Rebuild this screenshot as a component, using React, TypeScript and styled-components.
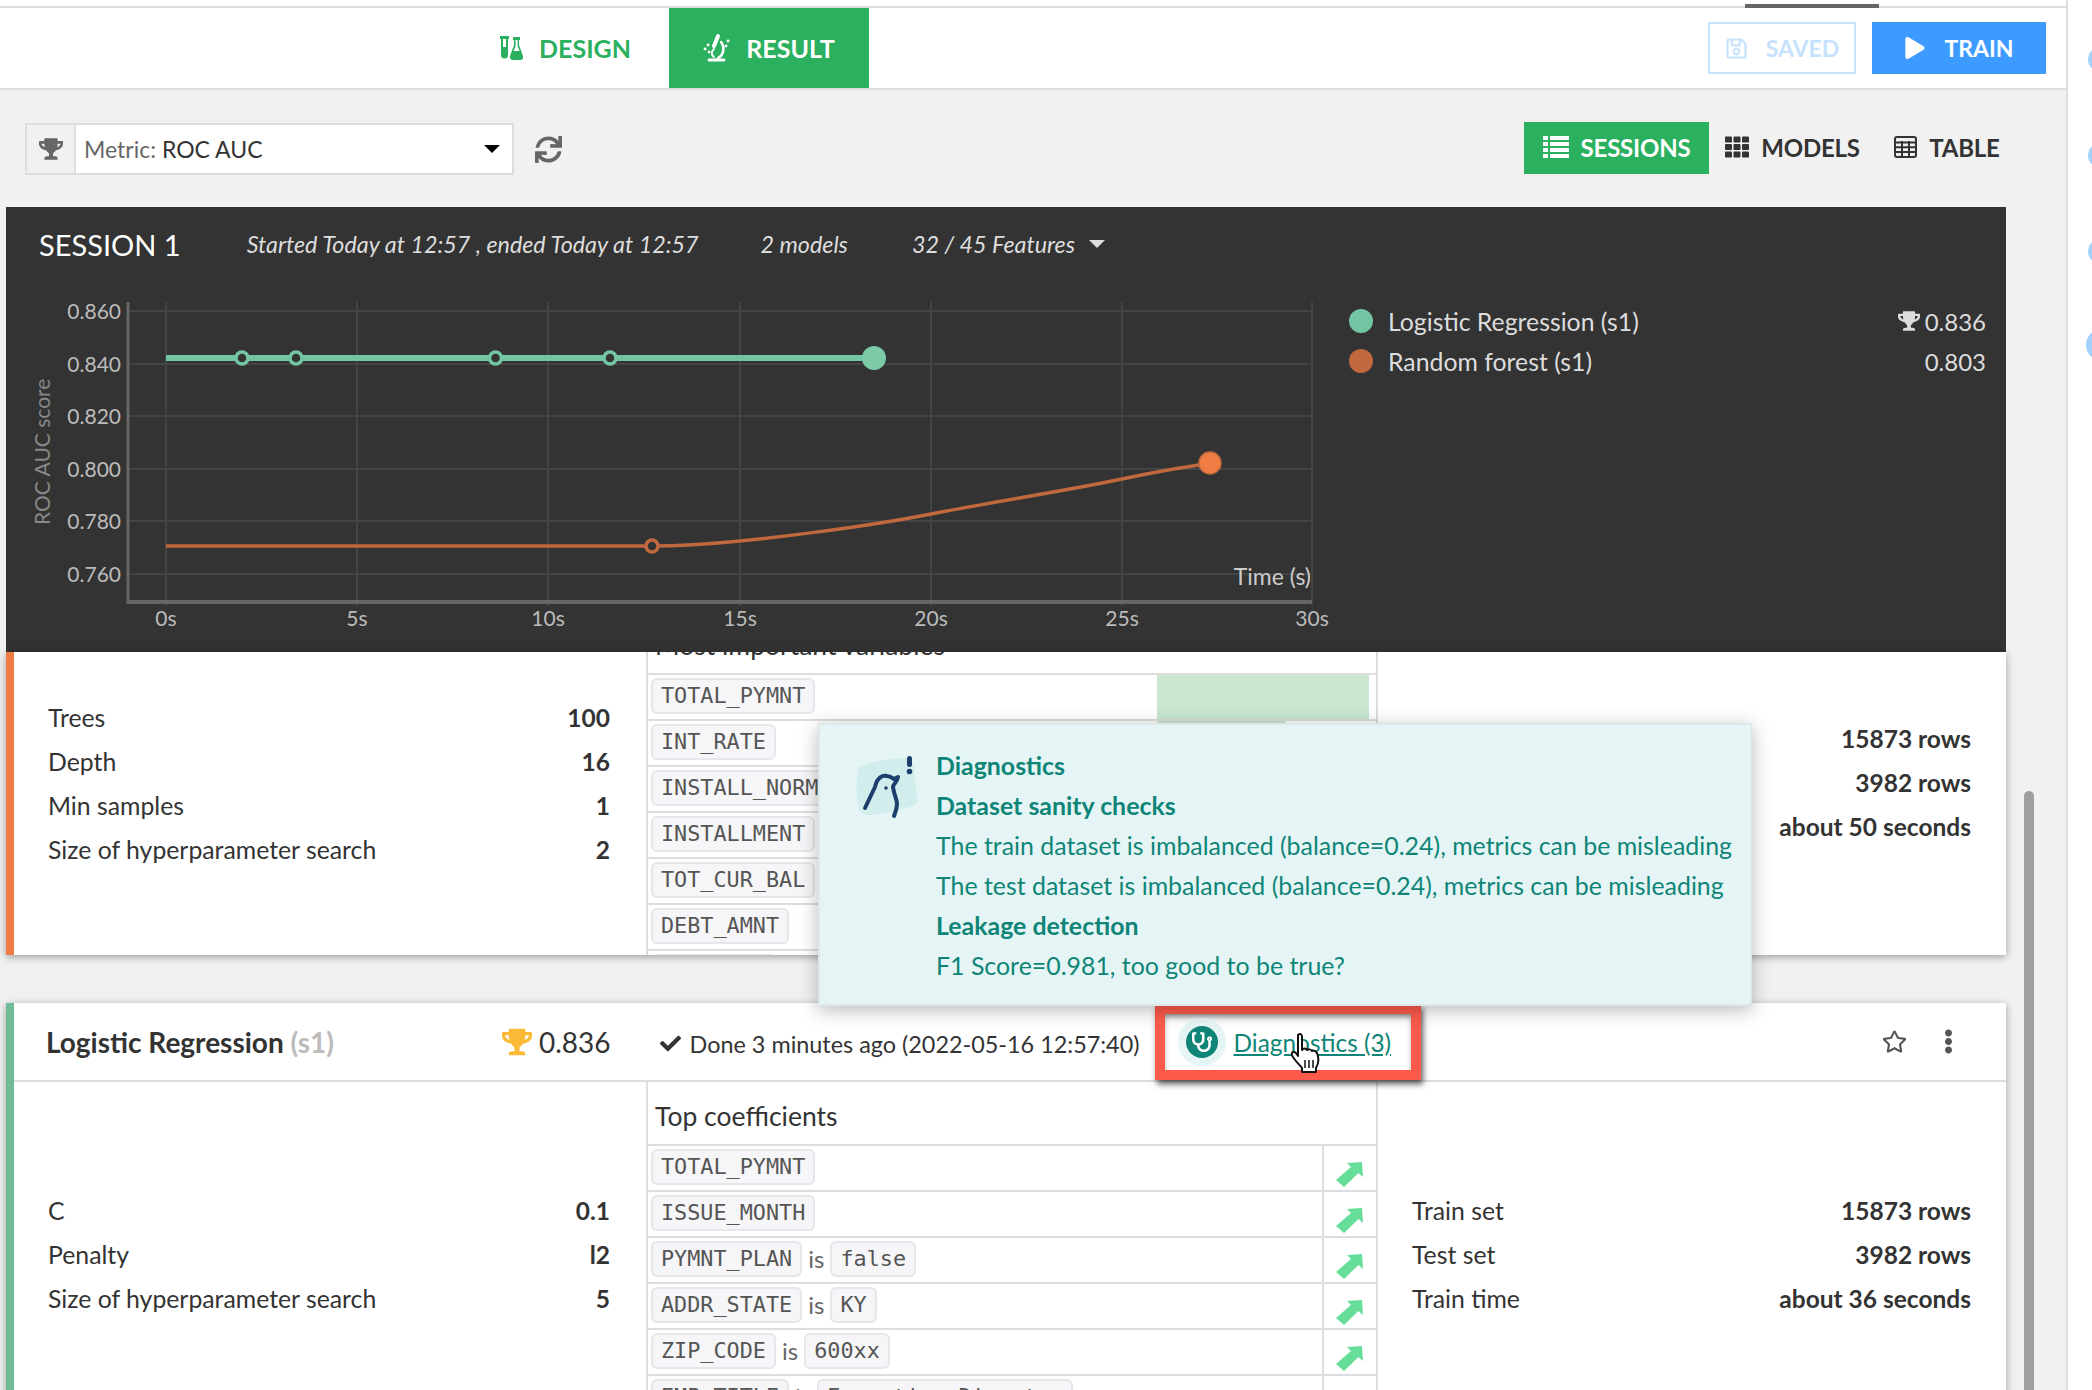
import styled, { createGlobalStyle } from 'styled-components';
import {
  FaCheck,
  FaEllipsisV,
  FaPlay,
  FaRegSave,
  FaRegStar,
  FaStethoscope,
  FaSync,
  FaTh,
  FaTrophy,
} from 'react-icons/fa';

const GlobalStyle = createGlobalStyle`
  *, *::before, *::after {
    box-sizing: border-box;
  }
  html, body {
    margin: 0;
    padding: 0;
    background: #fff;
  }
  body {
    font-family: Lato, "Noto Sans", sans-serif;
    color: #333;
  }
`;

const Shell = styled.div`
  display: flex;
  width: 2092px;
  height: 1390px;
  overflow: hidden;
`;

const Main = styled.div`
  width: 2068px;
  flex: none;
  display: flex;
  flex-direction: column;
  border-right: 2px solid #ddd;
  background: #f1f1f1;
  overflow: hidden;
`;

const Rail = styled.div`
  flex: none;
  width: 24px;
  padding: 47px 0 0 20px;
  display: flex;
  flex-direction: column;
  gap: 71px;
  align-items: flex-start;
`;

const RailDot = styled.div<{ $big?: boolean }>`
  width: ${({ $big }) => ($big ? 32 : 25)}px;
  height: ${({ $big }) => ($big ? 32 : 25)}px;
  flex: none;
  border-radius: 50%;
  background: #a3d1fb;
  margin-left: ${({ $big }) => ($big ? -2 : 0)}px;
  margin-top: ${({ $big }) => ($big ? -6 : 0)}px;
`;

const TopStrip = styled.div`
  height: 8px;
  flex: none;
  background: #fff;
  border-bottom: 2px solid #ddd;
  position: relative;
`;

const TopMarker = styled.div`
  position: absolute;
  left: 1745px;
  top: 4px;
  width: 134px;
  height: 4px;
  background: #666;
`;

const TopBar = styled.div`
  height: 82px;
  flex: none;
  display: flex;
  background: #fff;
  border-bottom: 2px solid #ddd;
  padding-left: 482px;
  padding-right: 20px;
`;

const ModeTab = styled.div<{ $active?: boolean }>`
  display: flex;
  align-items: center;
  justify-content: center;
  gap: 16px;
  width: ${({ $active }) => ($active ? 200 : 187)}px;
  padding-right: ${({ $active }) => ($active ? 0 : 20)}px;
  font-size: 25px;
  font-weight: 700;
  color: ${({ $active }) => ($active ? '#fff' : '#2bb05f')};
  background: ${({ $active }) => ($active ? '#2bb05f' : 'transparent')};
`;

const TopActions = styled.div`
  margin-left: auto;
  display: flex;
  align-items: flex-start;
  gap: 16px;
  padding-top: 14px;
`;

const ActionButton = styled.div<{ $primary?: boolean }>`
  height: 52px;
  display: flex;
  align-items: center;
  justify-content: center;
  gap: 18px;
  width: ${({ $primary }) => ($primary ? 174 : 148)}px;
  font-size: 23px;
  font-weight: 700;
  color: ${({ $primary }) => ($primary ? '#fff' : '#c6e2fe')};
  background: ${({ $primary }) => ($primary ? '#3d9bff' : '#fff')};
  border: 2px solid ${({ $primary }) => ($primary ? '#3d9bff' : '#c6e2fe')};
`;

const Toolbar = styled.div`
  height: 117px;
  flex: none;
  display: flex;
  align-items: flex-start;
  padding: 32px 48px 0 25px;
`;

const MetricSelect = styled.div`
  width: 489px;
  height: 52px;
  margin-top: 1px;
  display: flex;
  align-items: center;
  border: 2px solid #ddd;
  background: #fff;
  font-size: 23px;
`;

const MetricAddon = styled.div`
  width: 49px;
  height: 100%;
  flex: none;
  display: flex;
  align-items: center;
  justify-content: center;
  background: #f1f1f1;
  border-right: 2px solid #ddd;
  color: #666;
  font-size: 24px;
  margin-right: 8px;
`;

const MetricLabel = styled.span`
  color: #666;
`;

const MetricValue = styled.span`
  margin-left: 6px;
  color: #333;
`;

const Caret = styled.span<{ $light?: boolean }>`
  display: inline-block;
  width: 0;
  height: 0;
  border-left: 8px solid transparent;
  border-right: 8px solid transparent;
  border-top: 8px solid ${({ $light }) => ($light ? '#ddd' : '#000')};
`;

const SelectCaret = styled(Caret)`
  margin-left: auto;
  margin-right: 12px;
`;

const RefreshButton = styled.div`
  margin: 14px 0 0 21px;
  color: #666;
  font-size: 27px;
  line-height: 0;
`;

const ViewSwitch = styled.div`
  margin-left: auto;
  display: flex;
  align-items: center;
  height: 52px;
`;

const ViewTab = styled.div<{ $active?: boolean; $w: number }>`
  width: ${({ $w }) => $w}px;
  height: 100%;
  padding-bottom: 2px;
  display: flex;
  align-items: center;
  justify-content: center;
  gap: 12px;
  font-size: 24px;
  font-weight: 700;
  letter-spacing: -0.2px;
  color: ${({ $active }) => ($active ? '#fff' : '#333')};
  background: ${({ $active }) => ($active ? '#2bb05f' : 'transparent')};
`;

const Workspace = styled.div`
  flex: 1;
  display: flex;
  min-height: 0;
`;

const Content = styled.div`
  width: 2000px;
  flex: none;
  margin-left: 6px;
  position: relative;
`;

const ScrollTrack = styled.div`
  flex: 1;
  padding: 584px 0 0 18px;
`;

const ScrollThumb = styled.div`
  width: 10px;
  height: 700px;
  border-radius: 5px;
  background: #9f9f9f;
`;

const SessionPanel = styled.section`
  height: 445px;
  background: #333;
  color: #ddd;
  display: flex;
  flex-direction: column;
`;

const SessionHeader = styled.div`
  height: 73px;
  flex: none;
  display: flex;
  align-items: center;
  padding: 1px 0 0 33px;
  font-size: 23.3px;
  font-style: italic;
`;

const SessionTitle = styled.h2`
  margin: 0 66px 0 0;
  font-size: 29px;
  font-weight: 400;
  font-style: normal;
  color: #fff;
`;

const SessionMeta = styled.span<{ $gap: number }>`
  margin-right: ${({ $gap }) => $gap}px;
  display: flex;
  align-items: center;
  gap: 14px;
`;

const ChartRow = styled.div`
  flex: 1;
  display: flex;
`;

const Legend = styled.div`
  flex: 1;
  padding: 21px 20px 0 3px;
`;

const LegendRow = styled.div`
  height: 40px;
  display: flex;
  align-items: center;
  font-size: 24.800px;
`;

const LegendDot = styled.span<{ $color: string }>`
  width: 24px;
  height: 24px;
  flex: none;
  border-radius: 50%;
  background: ${({ $color }) => $color};
  margin-right: 15px;
`;

const LegendScore = styled.span`
  margin-left: auto;
  display: flex;
  align-items: center;
  gap: 5px;
  color: #ddd;
  font-size: 24px;
`;

const ModelCard = styled.article<{ $accent: string; $height: number }>`
  height: ${({ $height }) => $height}px;
  background: #fff;
  border-left: 8px solid ${({ $accent }) => $accent};
  box-shadow: 0 2px 8px rgba(0, 0, 0, 0.35);
  overflow: hidden;
  display: flex;
  flex-direction: column;
`;

const FirstCard = styled(ModelCard)`
  margin-bottom: 48px;
`;

const CardHeader = styled.header`
  height: 79px;
  flex: none;
  display: flex;
  align-items: center;
  border-bottom: 2px solid #ddd;
  padding-left: 32px;
`;

const ModelName = styled.h3`
  margin: 0;
  width: 456px;
  flex: none;
  font-size: 28px;
  font-weight: 700;
  white-space: nowrap;
`;

const ModelSession = styled.span`
  color: #bbb;
`;

const Score = styled.div`
  display: flex;
  align-items: center;
  gap: 7px;
  font-size: 28px;
  color: #333;
`;

const ScoreTrophy = styled.span`
  color: #fbb938;
  font-size: 30px;
  line-height: 0;
`;

const DoneStatus = styled.div`
  margin-left: 49px;
  display: flex;
  align-items: center;
  gap: 9px;
  font-size: 23.4px;
  padding-top: 4px;
  white-space: nowrap;
`;

const CalloutBox = styled.div`
  width: 266px;
  height: 76px;
  margin: 1px 0 0 15px;
  align-self: flex-start;
  flex: none;
  display: flex;
  align-items: center;
  padding-left: 13px;
  border: 10px solid #ff5a4b;
  box-shadow: 2px 4px 6px rgba(0, 0, 0, 0.65), inset 0 4px 6px -2px rgba(0, 0, 0, 0.55);
  position: relative;
`;

const DiagnosticsBadge = styled.span`
  width: 48px;
  height: 48px;
  flex: none;
  border-radius: 50%;
  background: #e5f5f5;
  display: flex;
  align-items: center;
  justify-content: center;
  margin-right: 8px;
`;

const DiagnosticsDisc = styled.span`
  width: 32px;
  height: 32px;
  border-radius: 50%;
  background: #0f8578;
  color: #fff;
  display: flex;
  align-items: center;
  justify-content: center;
  font-size: 20px;
`;

const DiagnosticsLink = styled.a`
  font-size: 24.400px;
  color: #0f8578;
  text-decoration: underline;
  white-space: nowrap;
`;

const HandCursor = styled.svg`
  position: absolute;
  left: 126px;
  top: 18px;
`;

const CardTools = styled.div`
  margin-left: auto;
  display: flex;
  align-items: center;
  gap: 29px;
  padding-right: 45px;
  color: #555;
  font-size: 25px;
  line-height: 0;
`;

const CardBody = styled.div`
  flex: 1;
  min-height: 0;
  display: flex;
`;

const ParamColumn = styled.div<{ $top: number }>`
  flex: 1;
  padding: ${({ $top }) => $top}px 35px 0 34px;
  display: flex;
  flex-direction: column;
`;

const LeftParams = styled(ParamColumn)`
  flex: none;
  width: 632px;
  padding-right: 36px;
`;

const ParamRow = styled.div`
  height: 44px;
  display: flex;
  align-items: center;
  justify-content: space-between;
  font-size: 24.800px;
`;

const ParamValue = styled.strong`
  font-weight: 700;
  font-size: 24.500px;
`;

const VariablesColumn = styled.div<{ $shift: number }>`
  width: 732px;
  flex: none;
  border-left: 2px solid #ddd;
  border-right: 2px solid #ddd;
  margin-top: ${({ $shift }) => $shift}px;
`;

const VariablesTitle = styled.div`
  height: 62px;
  display: flex;
  align-items: center;
  padding: 5px 0 0 7px;
  font-size: 26.500px;
  white-space: nowrap;
`;

const VariableRow = styled.div`
  height: 46px;
  border-top: 2px solid #ddd;
  display: flex;
`;

const VariableCell = styled.div`
  flex: 1;
  min-width: 0;
  display: flex;
  align-items: flex-start;
  gap: 6px;
  padding: 3px 0 0 3px;
  font-size: 24px;
  line-height: 36px;
  color: #666;
  white-space: nowrap;
`;

const Chip = styled.code`
  height: 36px;
  padding: 0 8px;
  display: inline-flex;
  align-items: center;
  border: 2px solid #e6e6ec;
  border-radius: 6px;
  background: #f6f6f9;
  color: #555;
  font-family: "DejaVu Sans Mono", "Liberation Mono", monospace;
  font-size: 21.800px;
`;

const ImportanceCell = styled.div`
  width: 212px;
  flex: none;
  margin-right: 7px;
`;

const ImportanceBar = styled.div`
  height: 100%;
  background: #c8e6d0;
`;

const ArrowCell = styled.div`
  width: 54px;
  flex: none;
  border-left: 2px solid #ddd;
  display: flex;
  align-items: center;
  justify-content: center;
  padding-top: 14px;
`;

const Popover = styled.aside`
  position: absolute;
  left: 812px;
  top: 516px;
  width: 934px;
  height: 283px;
  padding: 20px 0 0 116px;
  background: #e5f5f5;
  border: 2px solid #dce9e9;
  box-shadow: 0 4px 18px rgba(0, 0, 0, 0.28);
  color: #0f8578;
  font-size: 24.900px;
  z-index: 5;
`;

const PopoverIcon = styled.svg`
  position: absolute;
  left: 37px;
  top: 32px;
  overflow: visible;
`;

const PopoverLine = styled.div<{ $bold?: boolean }>`
  height: 40px;
  line-height: 40px;
  white-space: nowrap;
  font-weight: ${({ $bold }) => ($bold ? 700 : 400)};
`;

function VialsIcon() {
  return (
    <svg width="23" height="24" viewBox="0 0 23 24" fill="currentColor">
      <path d="M1 0h8v3H8v16a3.500 3.500 0 0 1-7 0V3H0V0h1zm2 3v8h3V3H3z" fillRule="evenodd" />
      <path
        d="M13 1h7v3h-1v5l4 11c.5 2-.5 4-3 4h-7c-2.500 0-3.500-2-3-4l4-11V4h-1V1zm2.600 3v6l-2 5h6l-2-5V4h-2z"
        fillRule="evenodd"
      />
    </svg>
  );
}

function MicroscopeIcon() {
  return (
    <svg width="27" height="28" viewBox="0 0 27 28" fill="none" stroke="currentColor" strokeLinecap="round">
      <path d="M15 2l-4 10" strokeWidth="4" />
      <path d="M18 8c4 5 3 13-3 16" strokeWidth="2.500" />
      <path d="M11 15c-3 2-3 6 0 8" strokeWidth="2" />
      <path d="M6 26h15" strokeWidth="3" />
      <path d="M2 15h.1M5 11h.1M6 18h.1M25 7h.1M23 12h.1" strokeWidth="2.800" />
    </svg>
  );
}

function SessionListIcon() {
  return (
    <svg width="26" height="22" viewBox="0 0 26 22" fill="currentColor">
      {[0, 6, 12, 18].map((y) => (
        <g key={y}>
          <rect x="0" y={y} width="5" height="4" />
          <rect x="7" y={y} width="19" height="4" />
        </g>
      ))}
    </svg>
  );
}

function TableGridIcon() {
  return (
    <svg width="23" height="22" viewBox="0 0 23 22" fill="none" stroke="currentColor" strokeWidth="2">
      <rect x="1" y="1" width="21" height="20" rx="2" />
      <path d="M1 6.500h21M1 11.200h21M1 16h21M8 5v16M15 5v16" />
    </svg>
  );
}

function ScoreChart() {
  const gridY = [311, 364, 416, 469, 521, 574];
  const gridX = [166, 357, 548, 740, 931, 1122, 1312];
  const yLabels = ['0.860', '0.840', '0.820', '0.800', '0.780', '0.760'];
  const xLabels = ['0s', '5s', '10s', '15s', '20s', '25s', '30s'];
  const green = '#74c5a3';
  const orange = '#c0693f';
  return (
    <svg width="1340" height="372" viewBox="6 280 1340 372" fontFamily="Lato, sans-serif" fontSize="21">
      {gridY.map((y, i) => (
        <g key={y}>
          <line x1="128" x2="1312" y1={y} y2={y} stroke="#444" strokeWidth="2" />
          <text x="121" y={y + 8} textAnchor="end" fill="#bbb">
            {yLabels[i]}
          </text>
        </g>
      ))}
      {gridX.map((x, i) => (
        <g key={x}>
          <line x1={x} x2={x} y1="302" y2="606" stroke="#444" strokeWidth="2" />
          <text x={x} y="626" textAnchor="middle" fill="#bbb">
            {xLabels[i]}
          </text>
        </g>
      ))}
      <line x1="128" x2="128" y1="302" y2="604" stroke="#666" strokeWidth="3" />
      <line x1="127" x2="1312" y1="602" y2="602" stroke="#666" strokeWidth="4" />
      <text x="1311" y="585" textAnchor="end" fill="#ccc" fontSize="23">
        Time (s)
      </text>
      <text transform="translate(50 525) rotate(-90)" fill="#888" fontSize="21">
        ROC AUC score
      </text>

      <line x1="166" x2="874" y1="358" y2="358" stroke={green} strokeWidth="6" />
      {[242, 296, 495.5, 610].map((x) => (
        <circle key={x} cx={x} cy="358" r="6" fill="#333" stroke={green} strokeWidth="3.500" />
      ))}
      <circle cx="874" cy="358" r="12" fill="#7ccaa8" />

      <path
        d="M166 546H652C680 546 710 544 740 541S860 528 931 514S1060 492 1122 479S1185 468 1210 463"
        fill="none"
        stroke={orange}
        strokeWidth="3.500"
      />
      <circle cx="652" cy="546" r="6" fill="#333" stroke={orange} strokeWidth="3.500" />
      <circle cx="1210" cy="463" r="11" fill="#f07e44" stroke={orange} strokeWidth="1.500" />
    </svg>
  );
}

function TrendArrow() {
  return (
    <svg width="28" height="26" viewBox="0 0 28 26">
      <path d="M11 1L26 0L27 15L22.500 11L8 25L0 18L15 5Z" fill="#66dd99" />
    </svg>
  );
}

type Variable = { name: string; is?: string; bar?: number };

const importantVariables: Variable[] = [
  { name: 'TOTAL_PYMNT', bar: 100 },
  { name: 'INT_RATE', bar: 61 },
  { name: 'INSTALL_NORM', bar: 30 },
  { name: 'INSTALLMENT', bar: 24 },
  { name: 'TOT_CUR_BAL', bar: 20 },
  { name: 'DEBT_AMNT', bar: 15 },
  { name: 'FICO_LOW', bar: 10 },
];

const coefficients: Variable[] = [
  { name: 'TOTAL_PYMNT' },
  { name: 'ISSUE_MONTH' },
  { name: 'PYMNT_PLAN', is: 'false' },
  { name: 'ADDR_STATE', is: 'KY' },
  { name: 'ZIP_CODE', is: '600xx' },
  { name: 'EMP_TITLE', is: 'Executive Director' },
];

function Params({ rows }: { rows: [string, string][] }) {
  return (
    <>
      {rows.map(([label, value]) => (
        <ParamRow key={label}>
          <span>{label}</span>
          <ParamValue>{value}</ParamValue>
        </ParamRow>
      ))}
    </>
  );
}

function App() {
  return (
    <>
      <GlobalStyle />
      <Shell>
        <Main>
          <TopStrip>
            <TopMarker />
          </TopStrip>
          <TopBar>
            <ModeTab>
              <VialsIcon />
              DESIGN
            </ModeTab>
            <ModeTab $active>
              <MicroscopeIcon />
              RESULT
            </ModeTab>
            <TopActions>
              <ActionButton>
                <FaRegSave size={23} />
                SAVED
              </ActionButton>
              <ActionButton $primary>
                <FaPlay size={22} />
                TRAIN
              </ActionButton>
            </TopActions>
          </TopBar>

          <Toolbar>
            <MetricSelect>
              <MetricAddon>
                <FaTrophy />
              </MetricAddon>
              <MetricLabel>Metric:</MetricLabel>
              <MetricValue>ROC AUC</MetricValue>
              <SelectCaret />
            </MetricSelect>
            <RefreshButton>
              <FaSync />
            </RefreshButton>
            <ViewSwitch>
              <ViewTab $active $w={185}>
                <SessionListIcon />
                SESSIONS
              </ViewTab>
              <ViewTab $w={167}>
                <FaTh />
                MODELS
              </ViewTab>
              <ViewTab $w={142}>
                <TableGridIcon />
                TABLE
              </ViewTab>
            </ViewSwitch>
          </Toolbar>

          <Workspace>
            <Content>
              <SessionPanel>
                <SessionHeader>
                  <SessionTitle>SESSION 1</SessionTitle>
                  <SessionMeta $gap={62}>Started Today at 12:57 , ended Today at 12:57</SessionMeta>
                  <SessionMeta $gap={64}>2 models</SessionMeta>
                  <SessionMeta $gap={0}>
                    32 / 45 Features
                    <Caret $light />
                  </SessionMeta>
                </SessionHeader>
                <ChartRow>
                  <ScoreChart />
                  <Legend>
                    <LegendRow>
                      <LegendDot $color="#74c5a3" />
                      Logistic Regression (s1)
                      <LegendScore>
                        <FaTrophy size={22} />
                        0.836
                      </LegendScore>
                    </LegendRow>
                    <LegendRow>
                      <LegendDot $color="#c0693f" />
                      Random forest (s1)
                      <LegendScore>0.803</LegendScore>
                    </LegendRow>
                  </Legend>
                </ChartRow>
              </SessionPanel>

              <FirstCard $accent="#f07e44" $height={303}>
                <CardBody>
                  <LeftParams $top={43}>
                    <Params
                      rows={[
                        ['Trees', '100'],
                        ['Depth', '16'],
                        ['Min samples', '1'],
                        ['Size of hyperparameter search', '2'],
                      ]}
                    />
                  </LeftParams>
                  <VariablesColumn $shift={-41}>
                    <VariablesTitle>Most important variables</VariablesTitle>
                    {importantVariables.map((v) => (
                      <VariableRow key={v.name}>
                        <VariableCell>
                          <Chip>{v.name}</Chip>
                        </VariableCell>
                        <ImportanceCell>
                          <ImportanceBar style={{ width: `${v.bar}%` }} />
                        </ImportanceCell>
                      </VariableRow>
                    ))}
                  </VariablesColumn>
                  <ParamColumn $top={64}>
                    <Params
                      rows={[
                        ['Train set', '15873 rows'],
                        ['Test set', '3982 rows'],
                        ['Train time', 'about 50 seconds'],
                      ]}
                    />
                  </ParamColumn>
                </CardBody>
              </FirstCard>

              <Popover>
                <PopoverIcon width="62" height="60" viewBox="0 0 62 60">
                  <path
                    d="M2 10C14 4 36 1 46 1C54 1 56 6 57 12L60 40C61 48 58 49 52 50C40 53 22 58 12 58C5 58 2 54 1 48C-1 36-1 20 2 10Z"
                    fill="#d2eeec"
                  />
                  <path
                    d="M8 51L18 30C20 20 26 18 30 19C34 19 36 22 37 22L41 20C40 26 36 27 36 30C37 38 40 42 40 47C40 52 38 56 37 59"
                    fill="none"
                    stroke="#1c3f6e"
                    strokeWidth="4"
                    strokeLinecap="round"
                    strokeLinejoin="round"
                  />
                  <circle cx="29" cy="31" r="1.800" fill="#1c3f6e" />
                  <rect x="50" y="-1" width="5" height="11" rx="2.500" fill="#1c3f6e" />
                  <circle cx="52.500" cy="14.500" r="2.800" fill="#1c3f6e" />
                </PopoverIcon>
                <PopoverLine $bold>Diagnostics</PopoverLine>
                <PopoverLine $bold>Dataset sanity checks</PopoverLine>
                <PopoverLine>The train dataset is imbalanced (balance=0.24), metrics can be misleading</PopoverLine>
                <PopoverLine>The test dataset is imbalanced (balance=0.24), metrics can be misleading</PopoverLine>
                <PopoverLine $bold>Leakage detection</PopoverLine>
                <PopoverLine>F1 Score=0.981, too good to be true?</PopoverLine>
              </Popover>

              <ModelCard $accent="#6fbb96" $height={500}>
                <CardHeader>
                  <ModelName>
                    Logistic Regression <ModelSession>(s1)</ModelSession>
                  </ModelName>
                  <Score>
                    <ScoreTrophy>
                      <FaTrophy />
                    </ScoreTrophy>
                    0.836
                  </Score>
                  <DoneStatus>
                    <FaCheck size={21} />
                    Done 3 minutes ago (2022-05-16 12:57:40)
                  </DoneStatus>
                  <CalloutBox>
                    <DiagnosticsBadge>
                      <DiagnosticsDisc>
                        <FaStethoscope />
                      </DiagnosticsDisc>
                    </DiagnosticsBadge>
                    <DiagnosticsLink>Diagnostics (3)</DiagnosticsLink>
                    <HandCursor width="30" height="44" viewBox="0 0 30 44">
                      <path
                        d="M7 3c2-2 4-1 4 2v13c1-2 4-2 5 0 1-1 4-1 5 1 1-1 4 0 5 2 2 5 2 10-1 15v4H11v-4C8 32 3 28 1 23c-1-3 2-4 4-2l2 3V3z"
                        fill="#fff"
                        stroke="#111"
                        strokeWidth="2"
                        strokeLinejoin="round"
                      />
                      <path d="M14 28v8M18 28v8M22 28v8" stroke="#111" strokeWidth="1.500" />
                    </HandCursor>
                  </CalloutBox>
                  <CardTools>
                    <FaRegStar />
                    <FaEllipsisV />
                  </CardTools>
                </CardHeader>
                <CardBody>
                  <LeftParams $top={106}>
                    <Params
                      rows={[
                        ['C', '0.1'],
                        ['Penalty', 'l2'],
                        ['Size of hyperparameter search', '5'],
                      ]}
                    />
                  </LeftParams>
                  <VariablesColumn $shift={0}>
                    <VariablesTitle>Top coefficients</VariablesTitle>
                    {coefficients.map((v) => (
                      <VariableRow key={v.name}>
                        <VariableCell>
                          <Chip>{v.name}</Chip>
                          {v.is && 'is'}
                          {v.is && <Chip>{v.is}</Chip>}
                        </VariableCell>
                        <ArrowCell>
                          <TrendArrow />
                        </ArrowCell>
                      </VariableRow>
                    ))}
                  </VariablesColumn>
                  <ParamColumn $top={106}>
                    <Params
                      rows={[
                        ['Train set', '15873 rows'],
                        ['Test set', '3982 rows'],
                        ['Train time', 'about 36 seconds'],
                      ]}
                    />
                  </ParamColumn>
                </CardBody>
              </ModelCard>
            </Content>
            <ScrollTrack>
              <ScrollThumb />
            </ScrollTrack>
          </Workspace>
        </Main>
        <Rail>
          <RailDot />
          <RailDot />
          <RailDot />
          <RailDot $big />
        </Rail>
      </Shell>
    </>
  );
}

export default App;
